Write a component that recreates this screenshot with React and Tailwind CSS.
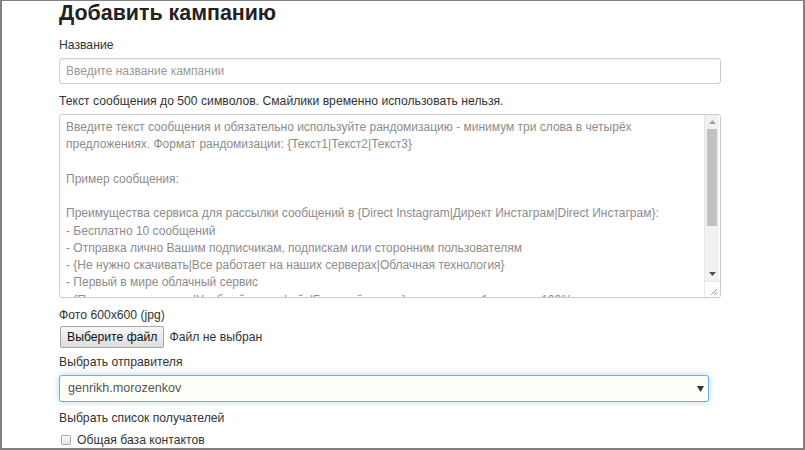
import React from "react";

const lines = [
  "Введите текст сообщения и обязательно используйте рандомизацию - минимум три слова в четырёх",
  "предложениях. Формат рандомизации: {Текст1|Текст2|Текст3}",
  "\u00a0",
  "Пример сообщения:",
  "\u00a0",
  "Преимущества сервиса для рассылки сообщений в {Direct Instagram|Директ Инстаграм|Direct Инстаграм}:",
  "- Бесплатно 10 сообщений",
  "- Отправка лично Вашим подписчикам, подпискам или сторонним пользователям",
  "- {Не нужно скачивать|Все работает на наших серверах|Облачная технология}",
  "- Первый в мире облачный сервис",
  "- {Простое управление|Удобный интерфейс|Быстрый запуск} рассылки за 1 минуту - 100% результат",
];

export default function App() {
  return (
    <div
      className="w-[805px] h-[450px] overflow-hidden bg-white border-t border-l-2 border-r-2 border-b-2 border-[#808080] text-[#333] text-[12.2px]"
      style={{ fontFamily: '"Liberation Sans", Arial, sans-serif' }}
    >
      <div className="pl-[57px] flex flex-col">
        <div className="h-[24px] leading-[24px] text-[21.4px] font-bold text-[#222]">
          Добавить кампанию
        </div>

        <div className="mt-[12px] leading-[16px]">Название</div>
        <div className="mt-[5px] w-[662px] h-[26px] border border-[#ccc] rounded-[3px] flex items-center pl-[6px] text-[#999] text-[12px] shadow-[inset_0_1px_1px_rgba(0,0,0,0.06)]">
          Введите название кампании
        </div>

        <div className="mt-[9px] leading-[16px]">
          Текст сообщения до 500 символов. Смайлики временно использовать нельзя.
        </div>
        <div className="mt-[5px] w-[662px] h-[184px] border border-[#ccc] rounded-[3px] flex overflow-hidden">
          <div className="flex-1 pl-[6px] pt-[4px] text-[#8c8c8c] text-[12px] leading-[17.25px] overflow-hidden whitespace-nowrap">
            {lines.map((l, i) => (
              <div key={i}>{l}</div>
            ))}
          </div>
          <div className="w-[15px] mr-[1px] flex flex-col bg-[#f1f1f1] border-l border-[#e6e6e6]">
            <div className="h-[14px] flex items-center justify-center">
              <svg width="7" height="4" viewBox="0 0 7 4">
                <path d="M0 4 L3.5 0 L7 4 Z" fill="#a3a3a3" />
              </svg>
            </div>
            <div className="mx-[2px] h-[97px] bg-[#c1c1c1]" />
            <div className="flex-1" />
            <div className="h-[14px] flex items-center justify-center">
              <svg width="7" height="4" viewBox="0 0 7 4">
                <path d="M0 0 L7 0 L3.5 4 Z" fill="#505050" />
              </svg>
            </div>
            <div className="h-[16px] bg-white border-t border-[#e6e6e6] flex items-end justify-end pr-[1px] pb-[1px]">
              <svg width="8" height="8" viewBox="0 0 8 8">
                <path d="M1 7 L7 1 M4 7 L7 4" stroke="#999" strokeWidth="1" />
              </svg>
            </div>
          </div>
        </div>

        <div className="mt-[9px] leading-[16px]">Фото 600x600 (jpg)</div>
        <div className="mt-[3px] flex items-center">
          <div className="ml-[1px] h-[22px] px-[6px] flex items-center border border-[#a6a6a6] rounded-[2px] bg-gradient-to-b from-[#f7f7f7] to-[#dddddd] text-[#111]">
            Выберите файл
          </div>
          <div className="ml-[5px]">Файл не выбран</div>
        </div>

        <div className="mt-[6px] leading-[16px]">Выбрать отправителя</div>
        <div className="mt-[5px] w-[650px] h-[27px] border border-[#66afe9] rounded-[3px] bg-[#fffffa] shadow-[0_0_6px_rgba(102,175,233,0.5)] flex items-center pl-[8px] pr-[4px] text-[#555] text-[12.6px]">
          <span className="flex-1">genrikh.morozenkov</span>
          <svg width="7" height="6" viewBox="0 0 7 6">
            <path d="M0 0 L7 0 L3.5 6 Z" fill="#333" />
          </svg>
        </div>

        <div className="mt-[8px] leading-[16px]">Выбрать список получателей</div>
        <div className="mt-[6px] h-[16px] flex items-center">
          <div className="ml-[2px] w-[10px] h-[10px] border border-[#a9a9a9] rounded-[2px] bg-gradient-to-b from-[#fafafa] to-[#e6e6e6]" />
          <div className="ml-[6px]">Общая база контактов</div>
        </div>
      </div>
    </div>
  );
}
